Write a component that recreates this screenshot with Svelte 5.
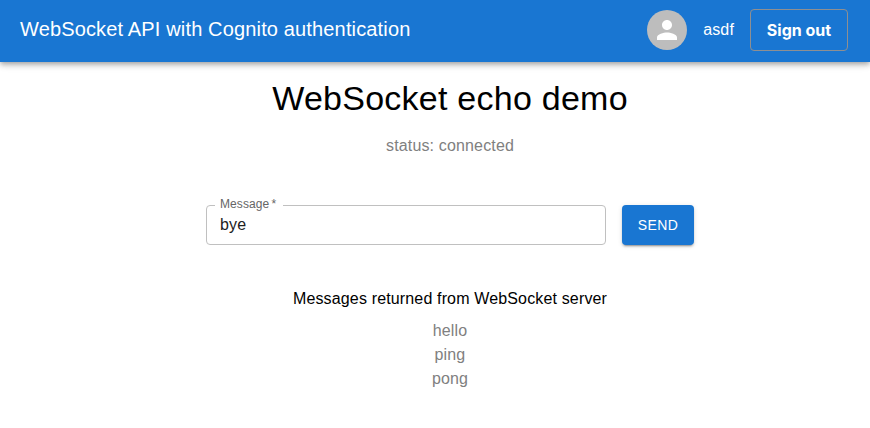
<script>
  let message = $state('bye');
  const messages = ['hello', 'ping', 'pong'];
</script>

<div class="page">
  <header>
    <div class="title">WebSocket API with Cognito authentication</div>
    <div class="avatar">
      <svg viewBox="0 0 24 24" width="30" height="30" fill="#fff" aria-hidden="true">
        <path d="M12 12c2.21 0 4-1.79 4-4s-1.79-4-4-4-4 1.79-4 4 1.79 4 4 4zm0 2c-2.67 0-8 1.34-8 4v2h16v-2c0-2.66-5.33-4-8-4z" />
      </svg>
    </div>
    <span class="user">asdf</span>
    <button class="signout">Sign out</button>
  </header>
  <main>
    <h1>WebSocket echo demo</h1>
    <p class="status">status: connected</p>
    <form onsubmit={(e) => e.preventDefault()}>
      <fieldset>
        <legend><label for="message">Message<span class="star">*</span></label></legend>
        <input id="message" bind:value={message} />
      </fieldset>
      <button class="send">SEND</button>
    </form>
    <h2>Messages returned from WebSocket server</h2>
    <ul>
      {#each messages as item}
        <li>{item}</li>
      {/each}
    </ul>
  </main>
</div>

<style>
  :global(body) {
    margin: 0;
    background: #fff;
  }
  .page {
    height: 428px;
    overflow: hidden;
    font: 16px/24px "Liberation Sans", Arial, sans-serif;
    letter-spacing: 0.15px;
    color: #000;
  }
  header {
    box-sizing: border-box;
    height: 62px;
    display: flex;
    align-items: center;
    padding: 0 22px 2px 20px;
    background: #1976d2;
    color: #fff;
    box-shadow: 0 2px 4px -1px rgba(0, 0, 0, 0.2), 0 4px 5px rgba(0, 0, 0, 0.14), 0 1px 10px rgba(0, 0, 0, 0.12);
  }
  .title {
    flex: 1;
    padding-bottom: 2px;
    font-size: 20px;
    line-height: 32px;
  }
  .avatar {
    width: 40px;
    height: 40px;
    border-radius: 50%;
    background: #bdbdbd;
    display: flex;
    align-items: center;
    justify-content: center;
  }
  .user {
    margin: 0 16px;
  }
  .signout {
    box-sizing: border-box;
    width: 98px;
    height: 42px;
    padding: 0;
    border: 1px solid #8f8f91;
    border-radius: 4px;
    background: transparent;
    color: #fff;
    font: 700 16px/24px Inter, sans-serif;
  }
  main {
    display: flex;
    flex-direction: column;
    align-items: center;
    padding: 15px 0 0 30px;
  }
  h1 {
    margin: 0;
    font-size: 34px;
    font-weight: 400;
    line-height: 42px;
    letter-spacing: 0.25px;
  }
  .status {
    margin: 15px 0 0;
    color: #808080;
  }
  form {
    display: flex;
    align-items: flex-end;
    gap: 16px;
    height: 50px;
    margin-top: 37px;
  }
  fieldset {
    box-sizing: border-box;
    width: 400px;
    height: 46px;
    margin: 0;
    padding: 0 13px 0 8px;
    border: 1px solid #c0c0c0;
    border-radius: 4px;
    min-width: 0;
  }
  legend {
    padding: 0 7px 2px 5px;
    height: 10px;
    font-size: 12px;
    line-height: 10px;
    letter-spacing: 0.1px;
    color: #666;
  }
  .star {
    margin-left: 2px;
  }
  input {
    display: block;
    box-sizing: border-box;
    width: 100%;
    height: 28px;
    padding: 0 5px;
    border: 0;
    outline: 0;
    background: transparent;
    color: #212121;
    font: inherit;
    letter-spacing: 0.15px;
  }
  .send {
    width: 72px;
    height: 40px;
    padding: 0;
    border: 0;
    border-radius: 4px;
    background: #1976d2;
    color: #fff;
    font: 14px/24px "Liberation Sans", Arial, sans-serif;
    letter-spacing: 0.4px;
    box-shadow: 0 3px 1px -2px rgba(0, 0, 0, 0.2), 0 2px 2px rgba(0, 0, 0, 0.14), 0 1px 5px rgba(0, 0, 0, 0.12);
  }
  h2 {
    margin: 42px 0 0;
    font-size: 16px;
    font-weight: 400;
    line-height: 24px;
  }
  ul {
    list-style: none;
    margin: 8px 0 0;
    padding: 0;
    color: #808080;
    text-align: center;
  }
</style>
